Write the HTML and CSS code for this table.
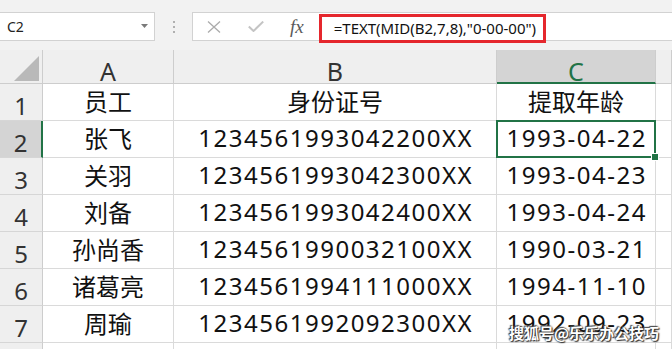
FILE: index.html
```html
<!DOCTYPE html>
<html lang="zh-CN">
<head>
<meta charset="utf-8">
<title>Excel TEXT MID</title>
<link rel="stylesheet" href="styles.css">
</head>
<body>
<div class="app">
  <div class="toolbar">
    <div class="namebox">
      <span class="nb-text">C2</span>
      <svg class="caret" width="7" height="4" viewBox="0 0 7 4"><path d="M0 0 L7 0 L3.5 4 Z" fill="#7a7a7a"/></svg>
    </div>
    <div class="grip"><i></i><i></i><i></i></div>
    <div class="fbar">
      <span class="ico ico-x"><svg width="16" height="12" viewBox="0 0 16 12"><path d="M2 0.5 L14 11.5 M14 0.5 L2 11.5" stroke="#ababab" stroke-width="1.3" fill="none"/></svg></span>
      <span class="ico ico-ok"><svg width="16" height="11" viewBox="0 0 16 11"><path d="M0.8 5.5 L5.5 10 L15.2 0.6" stroke="#c4c4c4" stroke-width="2" fill="none"/></svg></span>
      <span class="ico ico-fx">fx</span>
      <div class="formula">=TEXT(MID(B2,7,8),"0-00-00")</div>
    </div>
  </div>

  <div class="sheet">
    <div class="hd corner"><svg width="25" height="25" viewBox="0 0 25 25"><path d="M25 0 L25 25 L0 25 Z" fill="#b9b9b9"/></svg></div>
    <div class="hd col">A</div>
    <div class="hd col">B</div>
    <div class="hd col sel">C</div>
    <div class="hd col"></div>

    <div class="hd row">1</div>
    <div class="cell">员工</div>
    <div class="cell">身份证号</div>
    <div class="cell">提取年龄</div>
    <div class="cell"></div>

    <div class="hd row sel">2</div>
    <div class="cell">张飞</div>
    <div class="cell num">1234561993042200XX</div>
    <div class="cell num active">1993-04-22</div>
    <div class="cell"></div>

    <div class="hd row">3</div>
    <div class="cell">关羽</div>
    <div class="cell num">1234561993042300XX</div>
    <div class="cell num">1993-04-23</div>
    <div class="cell"></div>

    <div class="hd row">4</div>
    <div class="cell">刘备</div>
    <div class="cell num">1234561993042400XX</div>
    <div class="cell num">1993-04-24</div>
    <div class="cell"></div>

    <div class="hd row">5</div>
    <div class="cell">孙尚香</div>
    <div class="cell num">1234561990032100XX</div>
    <div class="cell num">1990-03-21</div>
    <div class="cell"></div>

    <div class="hd row">6</div>
    <div class="cell">诸葛亮</div>
    <div class="cell num">1234561994111000XX</div>
    <div class="cell num">1994-11-10</div>
    <div class="cell"></div>

    <div class="hd row">7</div>
    <div class="cell">周瑜</div>
    <div class="cell num">1234561992092300XX</div>
    <div class="cell num">1992-09-23</div>
    <div class="cell"></div>

    <div class="hd row"></div>
    <div class="cell"></div>
    <div class="cell"></div>
    <div class="cell"></div>
    <div class="cell"></div>
  </div>

  <div class="watermark">搜狐号@乐乐办公技巧</div>
</div>
</body>
</html>
```
FILE: styles.css
```css
* { box-sizing: border-box; }
html, body { margin: 0; padding: 0; }
body {
  width: 672px;
  height: 349px;
  overflow: hidden;
  background: #f2f2f2;
  font-family: "Noto Sans", "Noto Sans CJK SC", sans-serif;
  color: #111;
}
.app {
  position: relative;
  width: 672px;
  height: 349px;
  overflow: hidden;
}

/* toolbar / formula bar */
.toolbar {
  height: 50px;
  padding-top: 12px;
  display: flex;
  align-items: flex-start;
}
.namebox {
  width: 155px;
  height: 29px;
  background: #fff;
  border: 1px solid #d2d2d2;
  border-left: none;
  display: flex;
  align-items: center;
  justify-content: space-between;
  padding: 0 7px 0 7px;
}
.nb-text {
  font-size: 14px;
  color: #222;
}
.caret { margin-top: -2px; margin-right: -1px; }
.grip {
  width: 37px;
  height: 29px;
  display: flex;
  flex-direction: column;
  align-items: center;
  justify-content: center;
  gap: 3px;
}
.grip i {
  display: block;
  width: 2px;
  height: 2px;
  background: #b0b0b0;
}
.fbar {
  flex: 1;
  height: 29px;
  background: #fff;
  border: 1px solid #d2d2d2;
  border-right: none;
  display: flex;
  align-items: center;
  overflow: visible;
}
.ico { display: flex; align-items: center; }
.ico-x { margin-left: 13px; }
.ico-ok { margin-left: 26px; }
.ico-fx {
  margin-left: 26px;
  font-family: "Liberation Serif", "DejaVu Serif", serif;
  font-style: italic;
  font-size: 19px;
  color: #5a5a5a;
  line-height: 20px;
  margin-top: 1px;
}
.formula {
  align-self: flex-start;
  margin-top: 1px;
  margin-left: 15px;
  width: 227px;
  height: 29px;
  border: 3px solid #e5272d;
  padding-left: 12px;
  font-size: 15px;
  line-height: 22px;
  color: #111;
  white-space: nowrap;
}

/* sheet grid */
.sheet {
  display: grid;
  grid-template-columns: 43px 131px 323px 159px 16px;
  grid-template-rows: 34px repeat(8, 37px);
  background: #fff;
}
.hd {
  background: #efefef;
  border-right: 1px solid #cdcdcd;
  border-bottom: 1px solid #cdcdcd;
  color: #333;
  text-align: center;
}
.col {
  font-size: 25px;
  line-height: 24px;
  padding-top: 9px;
}
.row {
  font-size: 24px;
  line-height: 24px;
  padding-top: 10px;
  border-bottom-color: #d6d6d6;
}
.corner {
  display: flex;
  align-items: flex-end;
  justify-content: flex-end;
  padding: 0 3px 2px 0;
}
.hd.sel { background: #d4d4d4; }
.col.sel {
  color: #217346;
  border-bottom: 2px solid #217346;
}
.row.sel {
  border-right: 2px solid #217346;
}
.cell {
  position: relative;
  border-right: 1px solid #dadada;
  border-bottom: 1px solid #dadada;
  text-align: center;
  font-size: 24px;
  line-height: 24px;
  padding-top: 6px;
  white-space: nowrap;
  color: #111;
}
.num {
  letter-spacing: 1.5px;
  padding-left: 1.5px;
  padding-top: 5px;
}
.active::after {
  content: "";
  position: absolute;
  left: -1px;
  top: -1px;
  right: -1px;
  bottom: -1px;
  border: 2px solid #217346;
}
.active::before {
  content: "";
  position: absolute;
  right: -4px;
  bottom: -4px;
  width: 6px;
  height: 6px;
  background: #217346;
  border: 1px solid #fff;
  z-index: 2;
}

/* watermark overlay */
.watermark {
  position: absolute;
  right: 13px;
  bottom: 6px;
  font-family: "Noto Sans CJK SC", sans-serif;
  font-weight: 700;
  font-size: 15px;
  line-height: 20px;
  color: #fff;
  text-shadow: 0 0 2px #222, 1px 1px 1px #333, -1px -1px 1px #555;
}
```
